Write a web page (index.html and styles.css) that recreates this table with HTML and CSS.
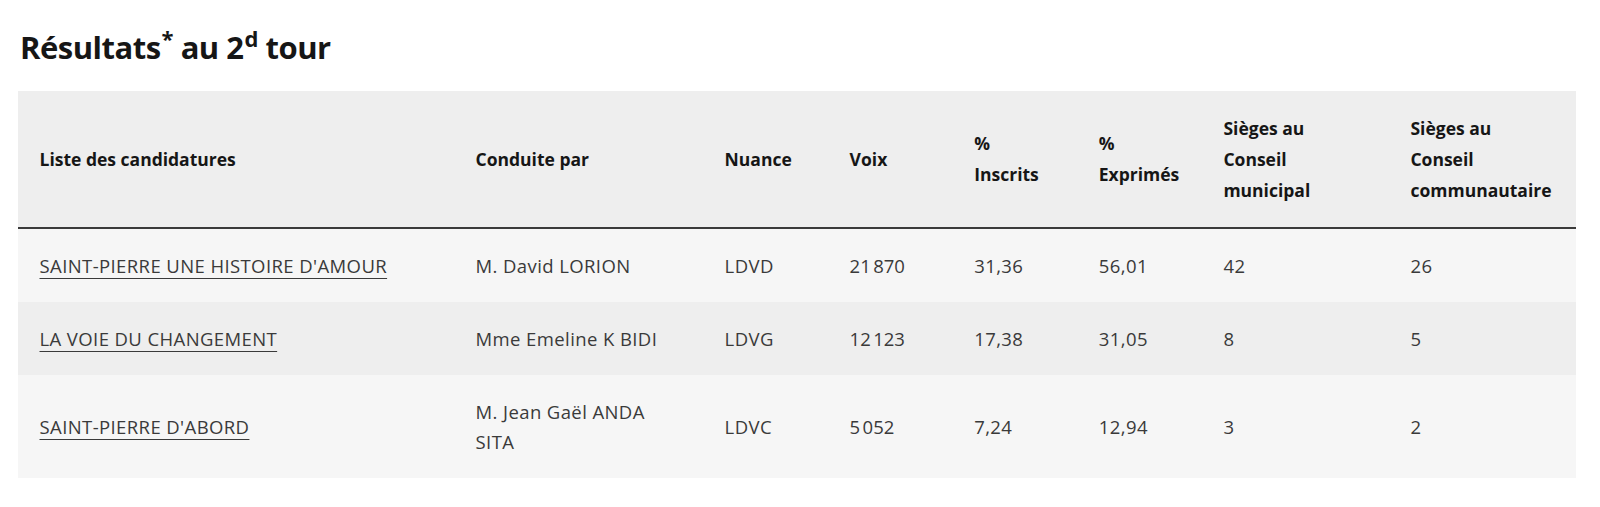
FILE: index.html
```html
<!DOCTYPE html>
<html lang="fr">
<head>
<meta charset="utf-8">
<title>Résultats au 2d tour</title>
<link rel="stylesheet" href="styles.css">
</head>
<body>
<main class="page">
  <h2 class="title">Résultats<sup class="star">*</sup> au 2<sup class="ord">d</sup> tour</h2>
  <table class="results">
    <colgroup>
      <col class="c-list">
      <col class="c-lead">
      <col class="c-nuance">
      <col class="c-num">
      <col class="c-num">
      <col class="c-num">
      <col class="c-seat">
      <col class="c-seat">
    </colgroup>
    <thead>
      <tr>
        <th>Liste des candidatures</th>
        <th>Conduite par</th>
        <th>Nuance</th>
        <th>Voix</th>
        <th>%<br>Inscrits</th>
        <th>%<br>Exprimés</th>
        <th>Sièges au<br>Conseil<br>municipal</th>
        <th>Sièges au<br>Conseil<br>communautaire</th>
      </tr>
    </thead>
    <tbody>
      <tr>
        <td><a class="link" href="#">SAINT-PIERRE UNE HISTOIRE D'AMOUR</a></td>
        <td>M. David LORION</td>
        <td>LDVD</td>
        <td>21&#8239;870</td>
        <td>31,36</td>
        <td>56,01</td>
        <td>42</td>
        <td>26</td>
      </tr>
      <tr>
        <td><a class="link" href="#">LA VOIE DU CHANGEMENT</a></td>
        <td>Mme Emeline K BIDI</td>
        <td>LDVG</td>
        <td>12&#8239;123</td>
        <td>17,38</td>
        <td>31,05</td>
        <td>8</td>
        <td>5</td>
      </tr>
      <tr>
        <td><a class="link" href="#">SAINT-PIERRE D'ABORD</a></td>
        <td>M. Jean Gaël ANDA SITA</td>
        <td>LDVC</td>
        <td>5&#8239;052</td>
        <td>7,24</td>
        <td>12,94</td>
        <td>3</td>
        <td>2</td>
      </tr>
    </tbody>
  </table>
</main>
</body>
</html>
```

FILE: styles.css
```css
* { box-sizing: border-box; }

html, body {
  margin: 0;
  padding: 0;
  background: #ffffff;
}

body {
  font-family: "Open Sans", "Liberation Sans", sans-serif;
  color: #3a3a3a;
}

.page {
  padding: 27px 0 0 18px;
}

.title {
  margin: 0 0 24px 2px;
  font-size: 31px;
  line-height: 40px;
  font-weight: 700;
  color: #161616;
  letter-spacing: -0.5px;
}

.title sup {
  font-size: 22px;
  line-height: 0;
  vertical-align: 0;
  position: relative;
}

.title .star { top: -12px; margin-left: 1px; }
.title .ord { top: -12px; margin-left: 1px; }

.results {
  width: 1558px;
  border-collapse: collapse;
  table-layout: fixed;
  font-size: 18.5px;
  line-height: 30px;
  letter-spacing: 0.4px;
}

.c-list { width: 436px; }
.c-lead { width: 249px; }
.c-nuance { width: 125px; }
.c-num { width: 124.6px; }
.c-seat { width: 187px; }

.results thead tr {
  background: #eeeeee;
  border-bottom: 2px solid #3a3a3a;
}

.results th {
  text-align: left;
  vertical-align: middle;
  font-weight: 700;
  font-size: 17.5px;
  line-height: 31px;
  letter-spacing: 0;
  color: #161616;
  padding: 21.5px 22px 21.5px 21.5px;
}

.results td {
  vertical-align: middle;
  padding: 21.5px 22px 21.5px 21.5px;
}

.results tbody tr:nth-child(odd) { background: #f6f6f6; }
.results tbody tr:nth-child(even) { background: #eeeeee; }

.link {
  color: #3a3a3a;
  text-decoration: underline;
  text-decoration-thickness: 1px;
  text-underline-offset: 5px;
}
```
